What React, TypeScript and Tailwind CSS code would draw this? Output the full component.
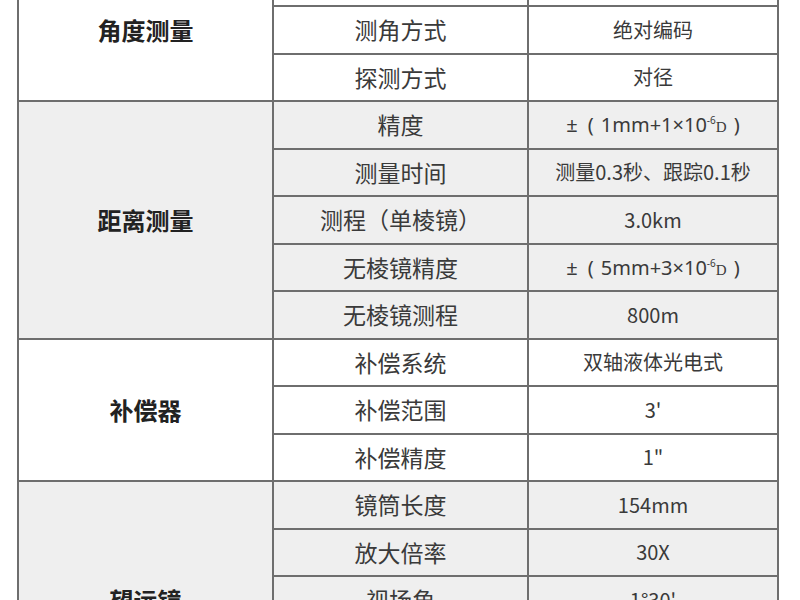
import React from "react";

type Row = { k: string; v: React.ReactNode };
type Group = { label: string; gray: boolean; rows: Row[] };

const sup = (a: string) => (
  <span className="font-['Noto_Sans',sans-serif] text-[20px]">
    ±<span className="ml-[10px] mr-[7px]">(</span>
    {a}
    <span className="text-[10px] align-[8px]">-6</span>
    <span className="text-[15px] font-['Liberation_Serif',serif]">D</span>
    <span className="ml-[7px]">)</span>
  </span>
);

const groups: Group[] = [
  {
    label: "角度测量",
    gray: false,
    rows: [
      { k: "测角精度", v: "2\"" },
      { k: "测角方式", v: "绝对编码" },
      { k: "探测方式", v: "对径" },
    ],
  },
  {
    label: "距离测量",
    gray: true,
    rows: [
      { k: "精度", v: sup("1mm+1×10") },
      { k: "测量时间", v: "测量0.3秒、跟踪0.1秒" },
      { k: "测程（单棱镜）", v: "3.0km" },
      { k: "无棱镜精度", v: sup("5mm+3×10") },
      { k: "无棱镜测程", v: "800m" },
    ],
  },
  {
    label: "补偿器",
    gray: false,
    rows: [
      { k: "补偿系统", v: "双轴液体光电式" },
      { k: "补偿范围", v: "3'" },
      { k: "补偿精度", v: "1\"" },
    ],
  },
  {
    label: "望远镜",
    gray: true,
    rows: [
      { k: "镜筒长度", v: "154mm" },
      { k: "放大倍率", v: "30X" },
      { k: "视场角", v: "1°30'" },
      { k: "最短视距", v: "1.0m" },
      { k: "分辨率", v: "3\"" },
    ],
  },
];

export default function App() {
  return (
    <div className="w-[800px] h-[600px] overflow-hidden bg-white font-['Noto_Sans_CJK_SC','Noto_Sans',sans-serif]">
      <table className="ml-[17px] mt-[-42.5px] w-[762px] border-collapse border-2 border-[#6e6e6e] table-fixed">
        <colgroup>
          <col className="w-[255px]" />
          <col className="w-[255px]" />
          <col className="w-[250px]" />
        </colgroup>
        <tbody>
          {groups.map((g) =>
            g.rows.map((r, i) => (
              <tr
                key={g.label + r.k}
                className={`h-[47.5px] ${g.gray ? "bg-[#efefef]" : "bg-white"}`}
              >
                {i === 0 && (
                  <td
                    rowSpan={g.rows.length}
                    className="border-2 border-[#6e6e6e] text-center align-middle text-[24px] font-bold text-[#222] p-0"
                  >
                    {g.label}
                  </td>
                )}
                <td className="border-2 border-[#6e6e6e] text-center align-middle text-[23px] text-[#3a3a3a] p-0 leading-none">
                  {r.k}
                </td>
                <td className="border-2 border-[#6e6e6e] text-center align-middle text-[20px] text-[#3a3a3a] p-0 leading-none">
                  {r.v}
                </td>
              </tr>
            ))
          )}
        </tbody>
      </table>
    </div>
  );
}
